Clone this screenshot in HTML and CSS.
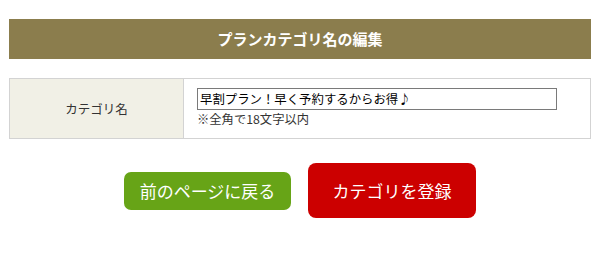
FILE: index.html
```html
<!DOCTYPE html>
<html lang="ja">
<head>
<meta charset="utf-8">
<title>プランカテゴリ名の編集</title>
<link rel="stylesheet" href="styles.css">
</head>
<body>
<div class="page">
  <h1 class="title">プランカテゴリ名の編集</h1>
  <table class="form-table">
    <tr>
      <th class="label">カテゴリ名</th>
      <td class="field">
        <input class="text-input" type="text" value="早割プラン！早く予約するからお得♪">
        <div class="note">※全角で18文字以内</div>
      </td>
    </tr>
  </table>
  <div class="actions">
    <a class="btn btn-back" href="#">前のページに戻る</a>
    <a class="btn btn-submit" href="#">カテゴリを登録</a>
  </div>
</div>
</body>
</html>
```
FILE: styles.css
```css
html, body {
  margin: 0;
  padding: 0;
  background: #fff;
}
body {
  font-family: "Noto Sans CJK JP", "Noto Sans", sans-serif;
  color: #333;
}
.page {
  padding: 19px 9px 0 9px;
}
.title {
  margin: 0;
  height: 40px;
  line-height: 40px;
  background: #8b7d4d;
  color: #fff;
  font-size: 15px;
  font-weight: bold;
  text-align: center;
}
.form-table {
  margin-top: 19px;
  width: 582px;
  border-collapse: collapse;
}
.form-table th,
.form-table td {
  border: 1px solid #d3d3d3;
  padding: 0;
}
.label {
  width: 173px;
  height: 59px;
  background: #f1f0e6;
  font-weight: normal;
  font-size: 12.5px;
  color: #333;
  text-align: center;
}
.field {
  padding: 9px 0 10px 13px !important;
  vertical-align: top;
}
.text-input {
  display: block;
  box-sizing: border-box;
  width: 360px;
  height: 22px;
  margin: 0;
  padding: 0 2px;
  border: 1px solid #7a7a7a;
  font-family: "Noto Sans CJK JP", sans-serif;
  font-size: 12.4px;
  color: #000;
}
.note {
  margin-top: 1px;
  font-size: 12.3px;
  line-height: 17px;
  color: #333;
}
.actions {
  display: flex;
  justify-content: center;
  align-items: center;
  gap: 17px;
  margin-top: 24px;
}
.btn {
  display: flex;
  align-items: center;
  justify-content: center;
  color: #fff;
  text-decoration: none;
  font-size: 17px;
}
.btn-back {
  width: 167px;
  height: 38px;
  background: #67a417;
  border-radius: 7px;
}
.btn-submit {
  width: 168px;
  height: 55px;
  background: #cc0000;
  border-radius: 8px;
}
```
